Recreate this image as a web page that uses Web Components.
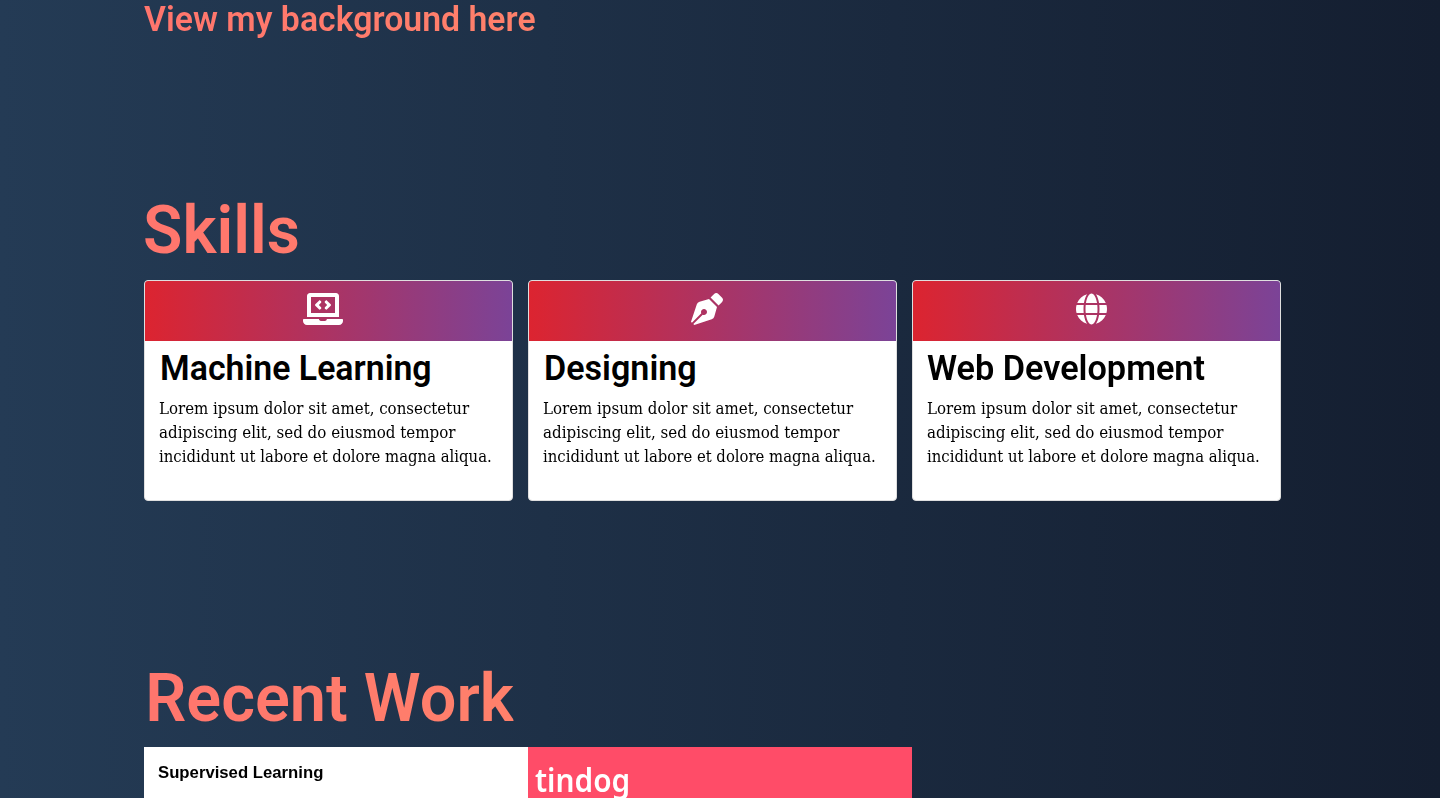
<!DOCTYPE html>
<html lang="en">
<head>
<meta charset="utf-8">
<title>Portfolio</title>
<style>
html,body{margin:0;height:100%;overflow:hidden}
body{background:linear-gradient(to right,#243b55,#141e30)}
</style>
</head>
<body>
<portfolio-page></portfolio-page>
<script>
// Single line of text whose ink spans a given width.
class FitText extends HTMLElement {
  connectedCallback() {
    const root = this.attachShadow({mode: 'open'});
    root.innerHTML = `<style>:host{display:block;white-space:nowrap;height:1lh}
      span{display:inline-block;transform-origin:0 0;color:inherit}
      :host(.coral) span{background:linear-gradient(to right,#ff756d,#ff806b 370px);-webkit-background-clip:text;background-clip:text;color:transparent}</style><span></span>`;
    const span = root.querySelector('span');
    span.textContent = this.getAttribute('text');
    const cs = getComputedStyle(this);
    const ctx = document.createElement('canvas').getContext('2d');
    ctx.font = `${cs.fontWeight} ${cs.fontSize} ${cs.fontFamily}`;
    const m = ctx.measureText(span.textContent);
    const s = this.getAttribute('ink') / (m.actualBoundingBoxLeft + m.actualBoundingBoxRight);
    span.style.transform = `translateX(${m.actualBoundingBoxLeft * s}px) scaleX(${s})`;
  }
}
customElements.define('fit-text', FitText);

const ICONS = {
  laptop: ['0 0 640 512', 40, 'M255.03 261.65c6.25 6.25 16.38 6.25 22.63 0l11.31-11.31c6.25-6.25 6.25-16.38 0-22.63L253.25 192l35.71-35.72c6.25-6.25 6.25-16.38 0-22.63l-11.31-11.31c-6.25-6.25-16.38-6.25-22.63 0l-58.34 58.34c-6.25 6.25-6.25 16.38 0 22.63l58.35 58.34zm96.01-11.3l11.31 11.31c6.25 6.25 16.38 6.25 22.63 0l58.34-58.34c6.25-6.25 6.25-16.38 0-22.63l-58.34-58.34c-6.25-6.25-16.38-6.25-22.63 0l-11.31 11.31c-6.25 6.25-6.25 16.38 0 22.63L386.75 192l-35.71 35.72c-6.25 6.25-6.25 16.38 0 22.63zM624 416H381.54c-.74 19.81-14.71 32-32.74 32H288c-18.69 0-33.02-17.47-32.77-32H16c-8.8 0-16 7.2-16 16v16c0 35.2 28.8 64 64 64h512c35.2 0 64-28.8 64-64v-16c0-8.8-7.2-16-16-16zM576 48c0-26.4-21.6-48-48-48H112C85.6 0 64 21.6 64 48v336h512V48zm-64 272H128V64h384v256z'],
  pen: ['0 0 512 512', 32, 'M136.6 138.79a64.003 64.003 0 0 0-43.31 41.35L0 460l14.69 14.69L164.8 324.58c-2.99-6.26-4.8-13.18-4.8-20.58 0-26.51 21.49-48 48-48s48 21.49 48 48-21.49 48-48 48c-7.4 0-14.32-1.81-20.58-4.8L37.31 497.31 52 512l279.86-93.29a64.003 64.003 0 0 0 41.35-43.31L416 224 288 96l-151.4 42.79zm361.34-64.62l-60.11-60.11c-18.75-18.75-49.16-18.75-67.91 0l-56.55 56.55 128.02 128.02 56.55-56.55c18.75-18.75 18.75-49.15 0-67.91z'],
  globe: ['0 0 496 512', 31, 'M336.5 160C322 70.7 287.8 8 248 8s-74 62.7-88.5 152h177zM152 256c0 22.2 1.2 43.5 3.3 64h185.3c2.1-20.5 3.3-41.8 3.3-64s-1.2-43.5-3.3-64H155.3c-2.1 20.5-3.3 41.8-3.3 64zm324.7-96c-28.6-67.9-86.5-120.4-158-141.6 24.4 33.8 41.2 84.7 50 141.6h108zM177.2 18.4C105.8 39.6 47.8 92.1 19.3 160h108c8.7-56.9 25.5-107.8 49.9-141.6zM487.4 192H372.7c2.1 21 3.3 42.5 3.3 64s-1.2 43-3.3 64h114.6c5.5-20.5 8.6-41.8 8.6-64s-3.1-43.5-8.5-64zM120 256c0-21.5 1.2-43 3.3-64H8.6C3.2 212.5 0 233.8 0 256s3.2 43.5 8.6 64h114.6c-2-21-3.2-42.5-3.2-64zm39.5 96c14.5 89.3 48.7 152 88.5 152s74-62.7 88.5-152h-177zm159.3 141.6c71.4-21.2 129.4-73.7 158-141.6h-108c-8.8 56.9-25.6 107.8-50 141.6zM19.3 352c28.6 67.9 86.5 120.4 158 141.6-24.4-33.8-41.2-84.7-50-141.6h-108z']
};

class SkillCard extends HTMLElement {
  connectedCallback() {
    const [box, w, d] = ICONS[this.getAttribute('icon')];
    this.attachShadow({mode: 'open'}).innerHTML = `<style>
      :host{display:block;box-sizing:border-box;width:369px;height:221px;background:#fff;border:1px solid #dfdfdf;border-radius:4px;overflow:hidden;color:#000}
      header{height:60px;box-sizing:border-box;padding:12px 10.5px 0 0;display:flex;justify-content:center;background:linear-gradient(to right,#dc2430,#7b4397)}
      svg{display:block;height:32px;fill:#fff}
      .title{padding:7px 0 9px}
      p{margin:0;padding-left:13.7px;font:16.5px/24px "DejaVu Serif Condensed","DejaVu Serif",serif;font-stretch:condensed}
      </style>
      <header><svg viewBox="${box}" width="${w}"><path d="${d}"/></svg></header>
      <div class="title"><slot></slot></div>
      <p><fit-text text="Lorem ipsum dolor sit amet, consectetur" ink="311"></fit-text>
      <fit-text text="adipiscing elit, sed do eiusmod tempor" ink="297.5"></fit-text>
      <fit-text text="incididunt ut labore et dolore magna aliqua." ink="332"></fit-text></p>`;
  }
}
customElements.define('skill-card', SkillCard);

class WorkTile extends HTMLElement {
  connectedCallback() {
    this.attachShadow({mode: 'open'}).innerHTML = `<style>
      :host{display:block;width:384px;height:260px;background:var(--tile)}</style><slot></slot>`;
  }
}
customElements.define('work-tile', WorkTile);

class PortfolioPage extends HTMLElement {
  connectedCallback() {
    this.attachShadow({mode: 'open'}).innerHTML = `<style>
      :host{display:block;height:100vh;overflow:hidden;padding-left:144px;box-sizing:border-box}
      .h{font:600 35.5px/38px Roboto,sans-serif}
      .big{font:600 67px/80px Roboto,sans-serif}
      .skills{margin-top:152px}
      .skills .big{padding-left:.8px}
      .cards{display:flex;gap:15px;margin-top:10px}
      .name{font:600 35.5px/40px Roboto,sans-serif}
      .work{margin-top:157px}
      .work .big{padding-left:5px}
      .tiles{display:flex;margin-top:9px}
      .sup{font:700 17px/20px "Liberation Sans",sans-serif;color:#000;padding:16px 0 0 13.5px}
      .dog{font:600 31.5px/38px "Noto Sans",sans-serif;color:#fff;padding:14px 0 0 7.3px}
      </style>
      <fit-text class="h coral" text="View my background here" ink="391.5"></fit-text>
      <section class="skills"><fit-text class="big coral" text="Skills" ink="152.5"></fit-text>
        <div class="cards">
          <skill-card icon="laptop"><fit-text class="name" style="padding-left:16.5px" text="Machine Learning" ink="268.5"></fit-text></skill-card>
          <skill-card icon="pen"><fit-text class="name" style="padding-left:16.5px" text="Designing" ink="149.5"></fit-text></skill-card>
          <skill-card icon="globe"><fit-text class="name" style="padding-left:14.3px" text="Web Development" ink="278"></fit-text></skill-card>
        </div></section>
      <section class="work"><fit-text class="big coral" text="Recent Work" ink="365.5"></fit-text>
        <div class="tiles">
          <work-tile style="--tile:#fff"><fit-text class="sup" text="Supervised Learning" ink="165"></fit-text></work-tile>
          <work-tile style="--tile:#ff4c68"><fit-text class="dog" text="tindog" ink="93.5"></fit-text></work-tile>
        </div></section>`;
  }
}
customElements.define('portfolio-page', PortfolioPage);
</script>
</body>
</html>
